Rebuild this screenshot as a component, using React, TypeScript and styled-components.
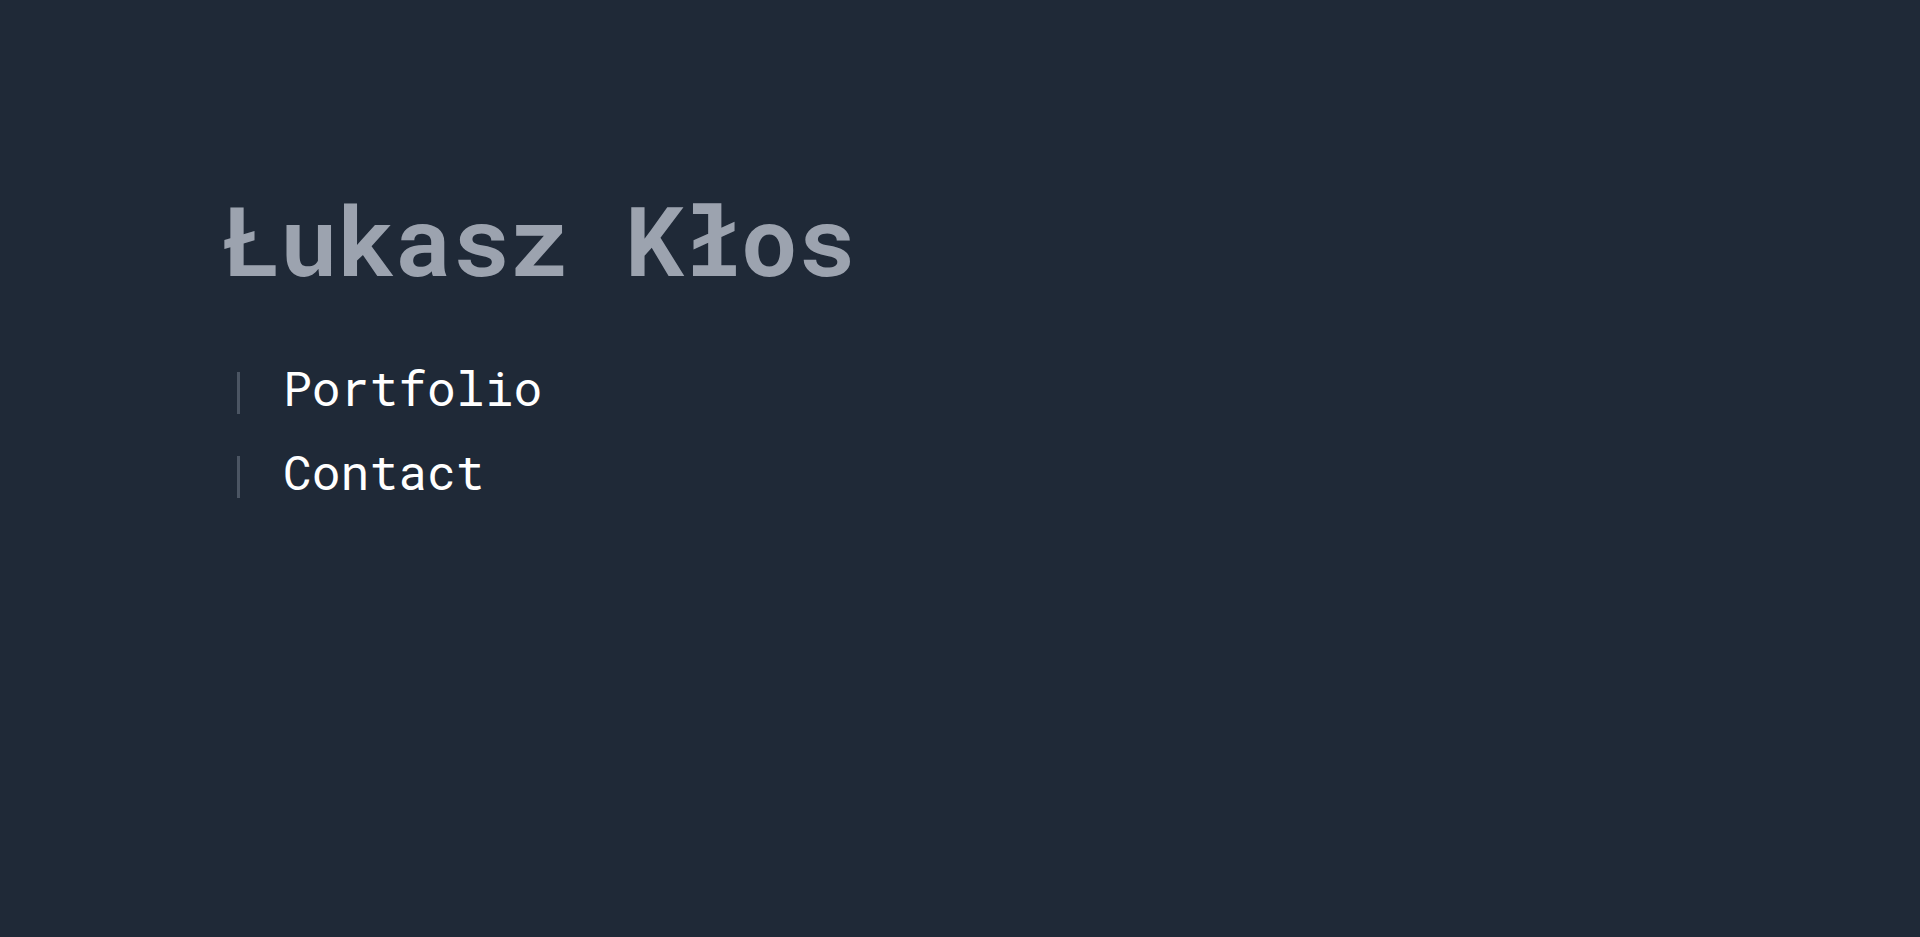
import React from "react";
import styled, { createGlobalStyle } from "styled-components";

const Global = createGlobalStyle`
  html, body { margin: 0; padding: 0; background: #1f2937; }
  body { font-family: "Roboto Mono", "DejaVu Sans Mono", "Liberation Mono", monospace; }
  #root { min-height: 100vh; }
`;

const Page = styled.main`
  min-height: 937px;
  background: #1f2937;
  box-sizing: border-box;
  padding: 175px 0 0 222px;
  display: flex;
  flex-direction: column;
`;

const Title = styled.h1`
  margin: 0;
  font-size: 96px;
  line-height: 128px;
  font-weight: 700;
  color: #9ca3af;
  letter-spacing: 0;
`;

const Nav = styled.nav`
  margin-top: 69px;
  margin-left: 15px;
  display: flex;
  flex-direction: column;
  gap: 42px;
`;

const NavLink = styled.a`
  display: block;
  border-left: 3px solid #4b5563;
  padding: 0 0 10px 43px;
  height: 32px;
  line-height: 32px;
  font-size: 48px;
  color: #ffffff;
  text-decoration: none;
`;

export default function App() {
  return (
    <>
      <Global />
      <Page>
        <Title>Łukasz Kłos</Title>
        <Nav>
          <NavLink href="#portfolio">Portfolio</NavLink>
          <NavLink href="#contact">Contact</NavLink>
        </Nav>
      </Page>
    </>
  );
}
